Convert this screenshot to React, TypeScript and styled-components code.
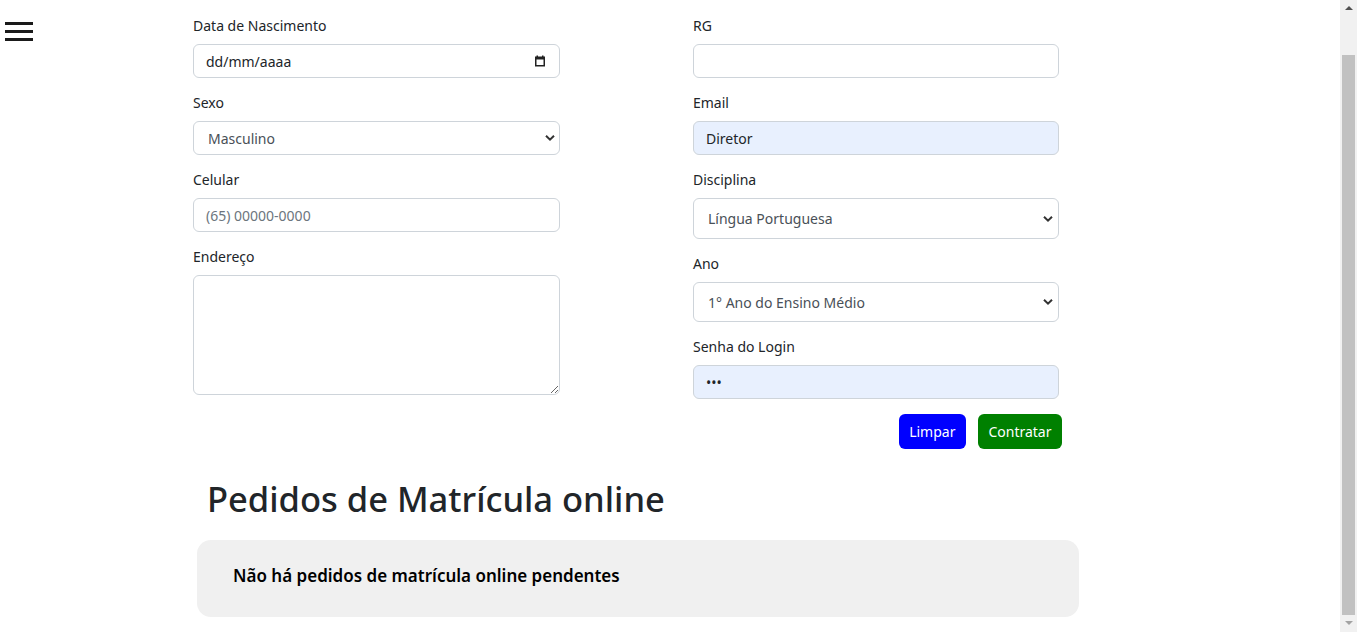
import React, { useLayoutEffect, useRef } from "react";
import styled, { createGlobalStyle } from "styled-components";

const FONT = `"Segoe UI", "Noto Sans", "Liberation Sans", sans-serif`;

const GlobalStyle = createGlobalStyle`
  html, body { margin: 0; padding: 0; height: 100%; overflow: hidden; background: #fff; }
  body { font-family: ${FONT}; color: #212529; }
  #root { height: 100%; }
  *, *::before, *::after { box-sizing: border-box; }
`;

const Shell = styled.div`
  display: flex;
  height: 100vh;
`;

const MenuRail = styled.aside`
  flex: 0 0 40px;
  padding: 22px 0 0 5px;
`;

const MenuButton = styled.button`
  display: flex;
  flex-direction: column;
  gap: 5px;
  width: 28px;
  padding: 0;
  border: 0;
  background: none;
  cursor: pointer;
`;

const MenuBar = styled.span`
  display: block;
  height: 3px;
  background: #1a1a1a;
`;

const ScrollArea = styled.main`
  flex: 1;
  height: 100%;
  overflow-y: scroll;
  overflow-x: hidden;
  scrollbar-width: none;
  &::-webkit-scrollbar { display: none; }
`;

const ScrollRail = styled.div`
  flex: 0 0 17px;
  display: flex;
  flex-direction: column;
  background: #f1f1f1;
`;

const RailButton = styled.div`
  flex: 0 0 17px;
  display: flex;
  align-items: center;
  justify-content: center;
`;

const RailArrow = styled.span<{ $dir: "up" | "down"; $color: string }>`
  width: 0;
  height: 0;
  border-left: 4px solid transparent;
  border-right: 4px solid transparent;
  ${(p) =>
    p.$dir === "up"
      ? `border-bottom: 4px solid ${p.$color}; margin-top: -1px;`
      : `border-top: 4px solid ${p.$color}; margin-top: -1px;`}
`;

const RailTrack = styled.div`
  flex: 1;
  display: flex;
  flex-direction: column;
  justify-content: flex-end;
  padding: 0 2px;
`;

const RailThumb = styled.div`
  height: 560px;
  background: #c1c1c1;
`;

const Page = styled.div`
  padding: 58px 0 15px 153px;
`;

const FormGrid = styled.form`
  display: grid;
  grid-template-columns: 367px 366px;
  column-gap: 133px;
  align-items: start;
`;

const Column = styled.div`
  display: flex;
  flex-direction: column;
`;

const Field = styled.div`
  display: flex;
  flex-direction: column;
  margin-bottom: 14px;
`;

const Label = styled.label`
  font-size: 14px;
  line-height: 21px;
  margin-bottom: 8px;
  color: #212529;
`;

const InputWrap = styled.div`
  position: relative;
  display: flex;
`;

const TextInput = styled.input<{ $autofill?: boolean; $strongPlaceholder?: boolean }>`
  width: 100%;
  height: 34px;
  padding: 0 12px;
  border: 1px solid #ced4da;
  border-radius: 6px;
  font: 14px ${FONT};
  color: #212529;
  background: ${(p) => (p.$autofill ? "#e8f0fe" : "#fff")};
  outline: none;
  &::placeholder {
    color: ${(p) => (p.$strongPlaceholder ? "#212529" : "#6c757d")};
    opacity: 1;
  }
`;

const Select = styled.select<{ $h: number }>`
  width: 100%;
  height: ${(p) => p.$h}px;
  padding: 0 30px 0 14px;
  border: 1px solid #ced4da;
  border-radius: 6px;
  font: 14px ${FONT};
  color: #495057;
  background: #fff;
  appearance: none;
  -webkit-appearance: none;
  outline: none;
`;

const TextArea = styled.textarea`
  width: 100%;
  height: 120px;
  padding: 6px 12px;
  border: 1px solid #ced4da;
  border-radius: 6px;
  font: 14px ${FONT};
  color: #212529;
  resize: vertical;
  outline: none;
`;

const FieldIcon = styled.span<{ $right: number }>`
  position: absolute;
  top: 50%;
  right: ${(p) => p.$right}px;
  transform: translateY(-50%);
  display: flex;
  pointer-events: none;
`;

const ButtonRow = styled.div`
  display: flex;
  justify-content: flex-end;
  gap: 12px;
  margin: 1px -3px 0 0;
`;

const ActionButton = styled.button<{ $tone: "blue" | "green" }>`
  height: 35px;
  padding: 0 10.5px;
  border: 0;
  border-radius: 6px;
  font: 14px ${FONT};
  color: #fff;
  background: ${(p) => (p.$tone === "blue" ? "#0000ff" : "#008000")};
  cursor: pointer;
`;

const SectionTitle = styled.h1`
  margin: 28px 0 20px 14px;
  font-size: 34.5px;
  line-height: 43px;
  font-weight: 500;
  color: #212529;
`;

const EmptyBox = styled.div`
  display: flex;
  align-items: center;
  width: 882px;
  height: 77px;
  margin-left: 4px;
  padding: 0 36px 6px;
  border-radius: 14px;
  background: #f0f0f0;
`;

const EmptyText = styled.p`
  margin: 0;
  font-size: 17px;
  font-weight: 600;
  color: #000;
`;

const Chevron = () => (
  <svg width="10" height="7" viewBox="0 0 10 7" fill="none">
    <path d="M1 1.2 L5 5.2 L9 1.2" stroke="#333" strokeWidth="2" />
  </svg>
);

const CalendarIcon = () => (
  <svg width="12" height="12" viewBox="0 0 12 12" fill="none">
    <rect x="1.75" y="2.25" width="8.5" height="8.5" stroke="#222" strokeWidth="1.5" />
    <rect x="1" y="2" width="10" height="2.5" fill="#222" />
    <rect x="2.5" y="0.5" width="1.5" height="2" fill="#222" />
    <rect x="8" y="0.5" width="1.5" height="2" fill="#222" />
  </svg>
);

export default function App() {
  const scrollRef = useRef<HTMLElement>(null);

  useLayoutEffect(() => {
    const el = scrollRef.current;
    if (el) el.scrollTop = el.scrollHeight;
  }, []);

  return (
    <>
      <GlobalStyle />
      <Shell>
        <MenuRail>
          <MenuButton type="button" aria-label="Menu">
            <MenuBar />
            <MenuBar />
            <MenuBar />
          </MenuButton>
        </MenuRail>
        <ScrollArea ref={scrollRef}>
          <Page>
            <FormGrid onSubmit={(e) => e.preventDefault()}>
              <Column>
                <Field>
                  <Label>Data de Nascimento</Label>
                  <InputWrap>
                    <TextInput placeholder="dd/mm/aaaa" $strongPlaceholder />
                    <FieldIcon $right={14}>
                      <CalendarIcon />
                    </FieldIcon>
                  </InputWrap>
                </Field>
                <Field>
                  <Label>Sexo</Label>
                  <InputWrap>
                    <Select $h={34} defaultValue="m">
                      <option value="m">Masculino</option>
                      <option value="f">Feminino</option>
                    </Select>
                    <FieldIcon $right={5}>
                      <Chevron />
                    </FieldIcon>
                  </InputWrap>
                </Field>
                <Field>
                  <Label>Celular</Label>
                  <TextInput placeholder="(65) 00000-0000" />
                </Field>
                <Field>
                  <Label>Endereço</Label>
                  <TextArea />
                </Field>
              </Column>
              <Column>
                <Field>
                  <Label>RG</Label>
                  <TextInput />
                </Field>
                <Field>
                  <Label>Email</Label>
                  <TextInput $autofill defaultValue="Diretor" />
                </Field>
                <Field>
                  <Label>Disciplina</Label>
                  <InputWrap>
                    <Select $h={41} defaultValue="lp">
                      <option value="lp">Língua Portuguesa</option>
                      <option value="mat">Matemática</option>
                    </Select>
                    <FieldIcon $right={6}>
                      <Chevron />
                    </FieldIcon>
                  </InputWrap>
                </Field>
                <Field>
                  <Label>Ano</Label>
                  <InputWrap>
                    <Select $h={40} defaultValue="1">
                      <option value="1">1° Ano do Ensino Médio</option>
                      <option value="2">2° Ano do Ensino Médio</option>
                      <option value="3">3° Ano do Ensino Médio</option>
                    </Select>
                    <FieldIcon $right={6}>
                      <Chevron />
                    </FieldIcon>
                  </InputWrap>
                </Field>
                <Field>
                  <Label>Senha do Login</Label>
                  <TextInput type="password" $autofill defaultValue="123" />
                </Field>
                <ButtonRow>
                  <ActionButton type="reset" $tone="blue">Limpar</ActionButton>
                  <ActionButton type="submit" $tone="green">Contratar</ActionButton>
                </ButtonRow>
              </Column>
            </FormGrid>
            <SectionTitle>Pedidos de Matrícula online</SectionTitle>
            <EmptyBox>
              <EmptyText>Não há pedidos de matrícula online pendentes</EmptyText>
            </EmptyBox>
          </Page>
        </ScrollArea>
        <ScrollRail aria-hidden="true">
          <RailButton>
            <RailArrow $dir="up" $color="#505050" />
          </RailButton>
          <RailTrack>
            <RailThumb />
          </RailTrack>
          <RailButton>
            <RailArrow $dir="down" $color="#a3a3a3" />
          </RailButton>
        </ScrollRail>
      </Shell>
    </>
  );
}
